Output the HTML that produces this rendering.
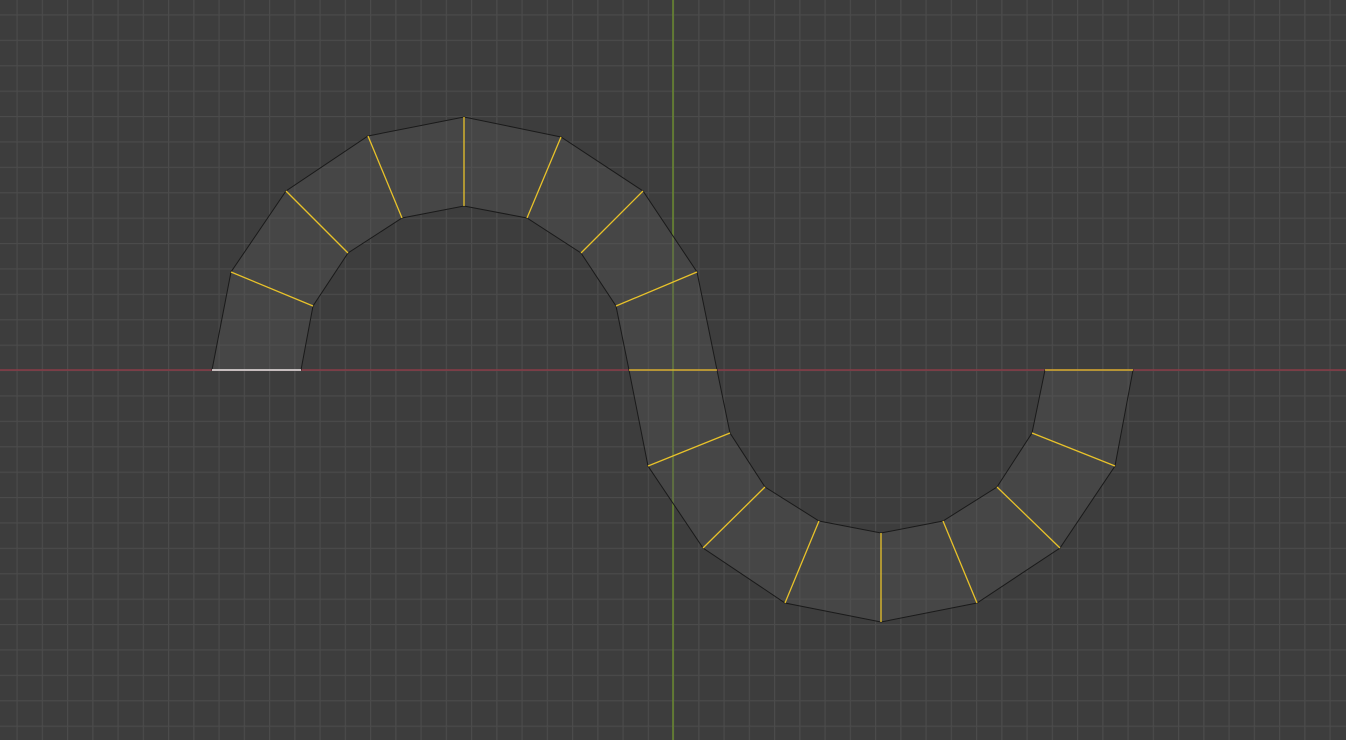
<!DOCTYPE html><html><head><style>html,body{margin:0;padding:0;background:#3d3d3d;overflow:hidden;width:1346px;height:740px}svg{display:block}</style></head><body>
<svg width="1346" height="740" viewBox="0 0 1346 740" xmlns="http://www.w3.org/2000/svg">
<defs>
<pattern id="g" x="673" y="370" width="25.25" height="25.4" patternUnits="userSpaceOnUse">
<path d="M0.5 0V25.4M0 0.5H25.25" stroke="#4b4b4b" stroke-width="1.3" fill="none"/>
</pattern>
</defs>
<rect width="1346" height="740" fill="#3d3d3d"/>
<rect width="1346" height="740" fill="url(#g)"/>
<line x1="0" y1="370" x2="1346" y2="370" stroke="#8a3b46" stroke-width="1.5"/>
<line x1="673" y1="0" x2="673" y2="740" stroke="#6a8a2e" stroke-width="1.5"/>
<polygon points="212,370 231,272 286,191 368,136 464,117 561,137 643,191 697,272 717,370 730,433 765,487 819,521 881,533 943,521 997,487 1032,433 1045,370 1133,370 1115,466 1060,548 977,603 881,622 785,603 703,548 648,466 629,370 616,306 581,253 527,218 464,206 402,218 348,253 313,306 301,370" fill="rgba(90,90,90,0.35)" stroke="#1a1a1a" stroke-width="1"/>
<g stroke="#e8c22a" stroke-width="1.3">
<line x1="231" y1="272" x2="313" y2="306"/><line x1="286" y1="191" x2="348" y2="253"/>
<line x1="368" y1="136" x2="402" y2="218"/><line x1="464" y1="117" x2="464" y2="206"/>
<line x1="561" y1="137" x2="527" y2="218"/><line x1="643" y1="191" x2="581" y2="253"/>
<line x1="697" y1="272" x2="616" y2="306"/><line x1="717" y1="370" x2="629" y2="370"/>
<line x1="730" y1="433" x2="648" y2="466"/><line x1="765" y1="487" x2="703" y2="548"/>
<line x1="819" y1="521" x2="785" y2="603"/><line x1="881" y1="533" x2="881" y2="622"/>
<line x1="943" y1="521" x2="977" y2="603"/><line x1="997" y1="487" x2="1060" y2="548"/>
<line x1="1032" y1="433" x2="1115" y2="466"/><line x1="1045" y1="370" x2="1133" y2="370"/>
</g>
<line x1="212" y1="370" x2="301" y2="370" stroke="#e6e6e6" stroke-width="1.5"/>
</svg>
</body></html>
